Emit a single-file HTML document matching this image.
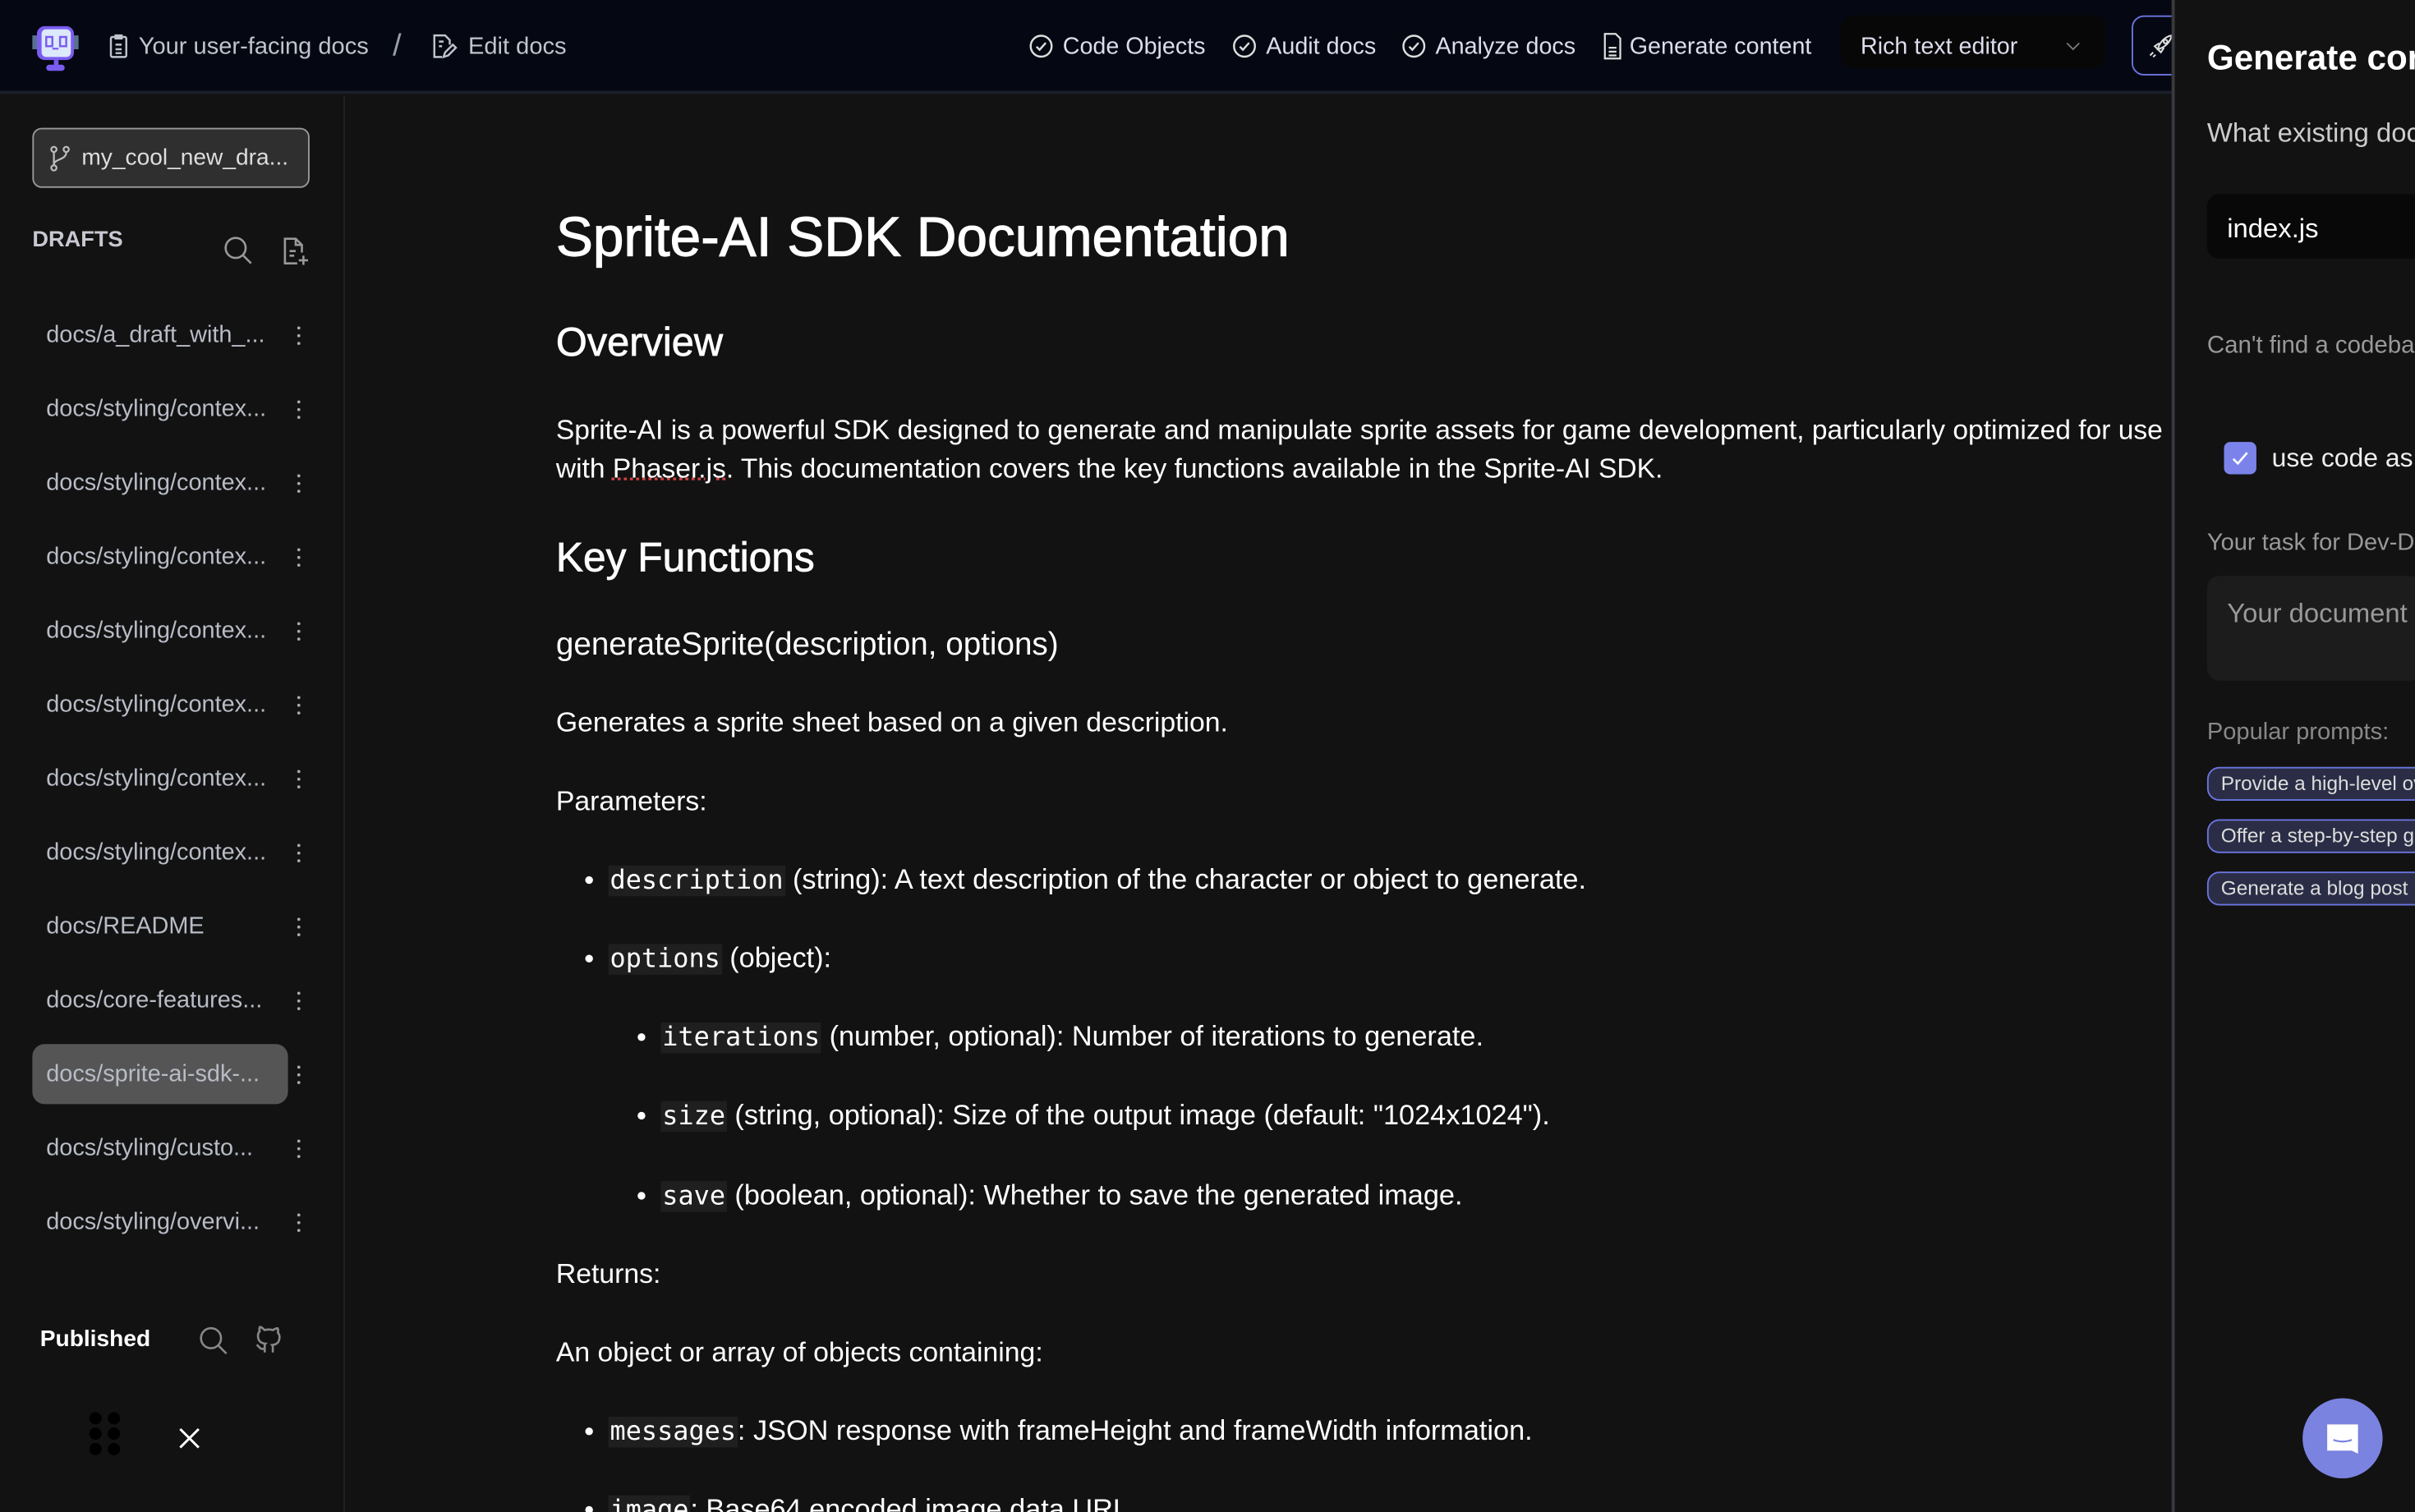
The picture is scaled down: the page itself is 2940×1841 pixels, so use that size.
<!DOCTYPE html>
<html><head><meta charset="utf-8"><style>
*{margin:0;padding:0;box-sizing:border-box}
html,body{width:2940px;height:1840px;overflow:hidden;background:#121212}
#s{position:absolute;left:0;top:0;width:1568px;height:982px;transform:scale(1.875);transform-origin:0 0;font-family:"Liberation Sans",sans-serif;color:#fff;background:#121212;overflow:hidden}
.a{position:absolute;white-space:nowrap}
.t{position:absolute;white-space:nowrap;line-height:24px;height:24px}
code{font-family:"DejaVu Sans Mono","Liberation Mono",monospace;background:#1f1f1f;font-size:17px;padding:0 1px}
.dot{position:absolute;width:5px;height:5px;border-radius:50%;background:#fff}
.si{position:absolute;left:30px;font-size:15.4px;color:#b8bcc6;line-height:20px}
.kb{position:absolute;left:193px;width:2px;height:12px}
.kb i{display:block;width:2px;height:2px;background:#aaa;margin-bottom:3px;border-radius:1px}
.chip{position:absolute;left:1433px;height:22px;border:1px solid #6b74e0;border-radius:8px;background:#2a2d45;font-size:13px;color:#ddd;line-height:20px;padding-left:8px;width:200px}
</style></head><body><div id="s">
<!-- topbar -->
<div class="a" style="left:0;top:0;width:1568px;height:61px;background:#050812;border-bottom:2px solid #1a1f2a"></div>
<svg class="a" style="left:20px;top:15px" width="32" height="32" viewBox="0 0 32 32"><rect x="1" y="8" width="4" height="9" fill="#5a7090"/><rect x="27" y="8" width="4" height="9" fill="#5a7090"/><rect x="4" y="2" width="24" height="22" rx="5" fill="#7b5cf0"/><rect x="7" y="4" width="19" height="18" rx="3" fill="#dce8fb"/><rect x="10" y="9" width="4" height="6" fill="none" stroke="#7b5cf0" stroke-width="1.3"/><rect x="19" y="9" width="4" height="6" fill="none" stroke="#7b5cf0" stroke-width="1.3"/><rect x="14" y="16" width="4" height="1.2" fill="#7b5cf0"/><rect x="15" y="24" width="3" height="4" fill="#7b5cf0"/><rect x="10" y="27" width="12" height="4" rx="2" fill="#7b5cf0"/></svg>
<svg class="a" style="left:70px;top:22px" width="14" height="16" viewBox="0 0 14 16" fill="none" stroke="#c0c4cc" stroke-width="1.3"><rect x="2" y="2" width="10" height="13" rx="1"/><rect x="5" y="1" width="4" height="2"/><path d="M5 7h4M5 10h4M5 12.5h4"/></svg>
<div class="t" style="left:90px;top:19px;font-size:15.5px;color:#c0c4cc">Your user-facing docs</div>
<div class="t" style="left:255px;top:18px;font-size:20px;color:#9aa0aa">/</div>
<svg class="a" style="left:279px;top:21px" width="18" height="18" viewBox="0 0 18 18" fill="none" stroke="#c0c4cc" stroke-width="1.3"><path d="M8 16H3V2h7l3 3v3"/><path d="M6 6h3M6 9h2"/><path d="M9 16l1-3 5-5 2 2-5 5z"/></svg>
<div class="t" style="left:304px;top:19px;font-size:15.5px;color:#c0c4cc">Edit docs</div>
<svg class="a" style="left:668px;top:22px" width="16" height="16" viewBox="0 0 16 16" fill="none" stroke="#ddd" stroke-width="1.3"><circle cx="8" cy="8" r="6.8"/><path d="M5 8.3l2 2 4-4.5"/></svg>
<div class="t" style="left:690px;top:19px;font-size:15.3px;color:#dde">Code Objects</div>
<svg class="a" style="left:800px;top:22px" width="16" height="16" viewBox="0 0 16 16" fill="none" stroke="#ddd" stroke-width="1.3"><circle cx="8" cy="8" r="6.8"/><path d="M5 8.3l2 2 4-4.5"/></svg>
<div class="t" style="left:822px;top:19px;font-size:15.3px;color:#dde">Audit docs</div>
<svg class="a" style="left:910px;top:22px" width="16" height="16" viewBox="0 0 16 16" fill="none" stroke="#ddd" stroke-width="1.3"><circle cx="8" cy="8" r="6.8"/><path d="M5 8.3l2 2 4-4.5"/></svg>
<div class="t" style="left:932px;top:19px;font-size:15.3px;color:#dde">Analyze docs</div>
<svg class="a" style="left:1040px;top:21px" width="14" height="18" viewBox="0 0 14 18" fill="none" stroke="#ddd" stroke-width="1.2"><path d="M2 1h7l3 3v13H2z"/><path d="M4.5 10h5M4.5 12.5h5M4.5 15h5"/></svg>
<div class="t" style="left:1058px;top:19px;font-size:15.3px;color:#dde">Generate content</div>
<div class="a" style="left:1195px;top:10px;width:172px;height:34px;background:#070707;border-radius:8px"></div>
<div class="t" style="left:1208px;top:19px;font-size:15.3px;color:#dde">Rich text editor</div>
<svg class="a" style="left:1341px;top:27px" width="10" height="6" viewBox="0 0 10 6" fill="none" stroke="#777" stroke-width="1"><path d="M1 1l4 4 4-4"/></svg>
<div class="a" style="left:1384px;top:10px;width:40px;height:39px;border:1.5px solid #6b74e0;border-radius:8px"></div>
<svg class="a" style="left:1395px;top:22px" width="16" height="16" viewBox="0 0 16 16" fill="none" stroke="#ddd" stroke-width="1.1"><path d="M6 10c1-4 4-8 9-9-1 5-5 8-9 9z"/><circle cx="11" cy="5" r="1.2"/><path d="M6 10l-2-2 3-2M6 10l2 2 2-3M3 12l-2 2M4.5 13.5l-1.5 1.5"/></svg>
<!-- sidebar -->
<div class="a" style="left:223px;top:62px;width:1px;height:920px;background:#222"></div>
<div class="a" style="left:21px;top:83px;width:180px;height:39px;border:1px solid #999;border-radius:6px;background:#2f2f2f"></div>
<svg class="a" style="left:32px;top:94px" width="14" height="18" viewBox="0 0 14 18" fill="none" stroke="#bbb" stroke-width="1.2"><circle cx="3" cy="3" r="1.7"/><circle cx="3" cy="15" r="1.7"/><circle cx="11" cy="3" r="1.7"/><path d="M3 5v8M11 5c0 5-8 4-8 8"/></svg>
<div class="t" style="left:53px;top:91px;font-size:15px;color:#ddd">my_cool_new_dra...</div>
<div class="t" style="left:21px;top:144px;font-size:14.5px;font-weight:bold;color:#c8c8d2">DRAFTS</div>
<svg class="a" style="left:145px;top:153px" width="19" height="19" viewBox="0 0 19 19" fill="none" stroke="#999" stroke-width="1.4"><circle cx="8" cy="8" r="6.5"/><path d="M13 13l5 5"/></svg>
<svg class="a" style="left:183px;top:153px" width="19" height="20" viewBox="0 0 19 20" fill="none" stroke="#999" stroke-width="1.4"><path d="M10 18H2V2h7l4 4v5"/><path d="M9 2v4h4M5 10h4M5 13h3M14 13v6M11 16h6"/></svg>
<div class="a" style="left:21px;top:678px;width:166px;height:39px;background:#555;border-radius:8px"></div>
<div class="si" style="top:208px">docs/a_draft_with_...</div>
<div class="si" style="top:256px">docs/styling/contex...</div>
<div class="si" style="top:304px">docs/styling/contex...</div>
<div class="si" style="top:352px">docs/styling/contex...</div>
<div class="si" style="top:400px">docs/styling/contex...</div>
<div class="si" style="top:448px">docs/styling/contex...</div>
<div class="si" style="top:496px">docs/styling/contex...</div>
<div class="si" style="top:544px">docs/styling/contex...</div>
<div class="si" style="top:592px">docs/README</div>
<div class="si" style="top:640px">docs/core-features...</div>
<div class="si" style="top:688px">docs/sprite-ai-sdk-...</div>
<div class="si" style="top:736px">docs/styling/custo...</div>
<div class="si" style="top:784px">docs/styling/overvi...</div>
<div class="kb" style="top:212px"><i></i><i></i><i></i></div>
<div class="kb" style="top:260px"><i></i><i></i><i></i></div>
<div class="kb" style="top:308px"><i></i><i></i><i></i></div>
<div class="kb" style="top:356px"><i></i><i></i><i></i></div>
<div class="kb" style="top:404px"><i></i><i></i><i></i></div>
<div class="kb" style="top:452px"><i></i><i></i><i></i></div>
<div class="kb" style="top:500px"><i></i><i></i><i></i></div>
<div class="kb" style="top:548px"><i></i><i></i><i></i></div>
<div class="kb" style="top:596px"><i></i><i></i><i></i></div>
<div class="kb" style="top:644px"><i></i><i></i><i></i></div>
<div class="kb" style="top:692px"><i></i><i></i><i></i></div>
<div class="kb" style="top:740px"><i></i><i></i><i></i></div>
<div class="kb" style="top:788px"><i></i><i></i><i></i></div>
<div class="t" style="left:26px;top:858px;font-size:15px;font-weight:bold;color:#fff">Published</div>
<svg class="a" style="left:129px;top:861px" width="19" height="19" viewBox="0 0 19 19" fill="none" stroke="#888" stroke-width="1.4"><circle cx="8" cy="8" r="6.5"/><path d="M13 13l5 5"/></svg>
<svg class="a" style="left:164px;top:859px" width="21" height="21" viewBox="0 0 24 24" fill="none" stroke="#888" stroke-width="1.6"><path d="M9 19c-4 1.5-4-2-6-2.5M15 22v-3.5c0-1 .1-1.4-.5-2 2.8-.3 5.5-1.4 5.5-6a4.6 4.6 0 0 0-1.3-3.2 4.2 4.2 0 0 0-.1-3.2s-1.1-.3-3.5 1.3a12 12 0 0 0-6.2 0C6.5 2.8 5.4 3.1 5.4 3.1a4.2 4.2 0 0 0-.1 3.2A4.6 4.6 0 0 0 4 9.5c0 4.6 2.7 5.7 5.5 6-.6.6-.6 1.2-.5 2V22"/></svg>
<div class="a" style="left:58px;top:917px;width:22px;height:33px">
<div class="a" style="left:0;top:0;width:8px;height:8px;border-radius:50%;background:#000"></div><div class="a" style="left:12px;top:0;width:8px;height:8px;border-radius:50%;background:#000"></div>
<div class="a" style="left:0;top:10px;width:8px;height:8px;border-radius:50%;background:#000"></div><div class="a" style="left:12px;top:10px;width:8px;height:8px;border-radius:50%;background:#000"></div>
<div class="a" style="left:0;top:20px;width:8px;height:8px;border-radius:50%;background:#000"></div><div class="a" style="left:12px;top:20px;width:8px;height:8px;border-radius:50%;background:#000"></div></div>
<svg class="a" style="left:116px;top:927px" width="14" height="14" viewBox="0 0 14 14" stroke="#fff" stroke-width="1.6"><path d="M1 1l12 12M13 1L1 13"/></svg>
<!-- content -->
<div class="a" style="left:361px;top:132px;font-size:36px;line-height:44px;color:#fff;-webkit-text-stroke:0.6px #fff">Sprite-AI SDK Documentation</div>
<div class="a" style="left:361px;top:206px;font-size:26px;line-height:32px;color:#fff;-webkit-text-stroke:0.4px #fff">Overview</div>
<div class="t" style="left:361px;top:267px;font-size:17.9px">Sprite-AI is a powerful SDK designed to generate and manipulate sprite assets for game development, particularly optimized for use</div>
<div class="t" style="left:361px;top:292px;font-size:17.9px">with <span style="text-decoration:underline dotted #d04040">Phaser.js</span>. This documentation covers the key functions available in the Sprite-AI SDK.</div>
<div class="a" style="left:361px;top:346px;font-size:26.5px;line-height:32px;color:#fff;-webkit-text-stroke:0.4px #fff">Key Functions</div>
<div class="a" style="left:361px;top:406px;font-size:20.6px;line-height:26px">generateSprite(description, options)</div>
<div class="t" style="left:361px;top:457px;font-size:18px">Generates a sprite sheet based on a given description.</div>
<div class="t" style="left:361px;top:508px;font-size:18px">Parameters:</div>
<div class="dot" style="left:380px;top:569px"></div>
<div class="t" style="left:395px;top:559px;font-size:18.3px"><code>description</code> (string): A text description of the character or object to generate.</div>
<div class="dot" style="left:380px;top:620px"></div>
<div class="t" style="left:395px;top:610px;font-size:18.3px"><code>options</code> (object):</div>
<div class="dot" style="left:414px;top:671px"></div>
<div class="t" style="left:429px;top:661px;font-size:18.3px"><code>iterations</code> (number, optional): Number of iterations to generate.</div>
<div class="dot" style="left:414px;top:722px"></div>
<div class="t" style="left:429px;top:712px;font-size:18.3px"><code>size</code> (string, optional): Size of the output image (default: "1024x1024").</div>
<div class="dot" style="left:414px;top:774px"></div>
<div class="t" style="left:429px;top:764px;font-size:18.3px"><code>save</code> (boolean, optional): Whether to save the generated image.</div>
<div class="t" style="left:361px;top:815px;font-size:18px">Returns:</div>
<div class="t" style="left:361px;top:866px;font-size:18px">An object or array of objects containing:</div>
<div class="dot" style="left:380px;top:927px"></div>
<div class="t" style="left:395px;top:917px;font-size:18.3px"><code>messages</code>: JSON response with frameHeight and frameWidth information.</div>
<div class="dot" style="left:380px;top:978px"></div>
<div class="t" style="left:395px;top:968px;font-size:18.3px"><code>image</code>: Base64 encoded image data URL.</div>
<!-- right panel -->
<div class="a" style="left:1410px;top:0;width:158px;height:982px;background:#121212;border-left:2px solid #3a3a3e"></div>
<div class="t" style="left:1433px;top:24px;font-size:22.5px;line-height:28px;height:28px;font-weight:bold">Generate content</div>
<div class="t" style="left:1433px;top:74px;font-size:17.5px;color:#ccc">What existing docs</div>
<div class="a" style="left:1433px;top:126px;width:140px;height:42px;background:#080808;border-radius:8px"></div>
<div class="t" style="left:1446px;top:136px;font-size:17.5px">index.js</div>
<div class="t" style="left:1433px;top:213px;font-size:15.7px;color:#999">Can't find a codebase</div>
<div class="a" style="left:1444px;top:287px;width:21px;height:21px;background:#7b83eb;border-radius:4px"></div>
<svg class="a" style="left:1448px;top:291px" width="13" height="13" viewBox="0 0 13 13" fill="none" stroke="#fff" stroke-width="1.4"><path d="M2 7l3 3 6-7"/></svg>
<div class="t" style="left:1475px;top:286px;font-size:17px;color:#eee">use code as</div>
<div class="t" style="left:1433px;top:341px;font-size:15.5px;color:#999">Your task for Dev-Docs</div>
<div class="a" style="left:1433px;top:374px;width:140px;height:68px;background:#1c1c1c;border-radius:8px"></div>
<div class="t" style="left:1446px;top:386px;font-size:17.5px;color:#999">Your document</div>
<div class="t" style="left:1433px;top:464px;font-size:15.5px;color:#888">Popular prompts:</div>
<div class="chip" style="top:498px">Provide a high-level overview</div>
<div class="chip" style="top:532px">Offer a step-by-step guide</div>
<div class="chip" style="top:566px">Generate a blog post</div>
<div class="a" style="left:1495px;top:908px;width:52px;height:52px;border-radius:50%;background:#7b83e0"></div>
<svg class="a" style="left:1509px;top:922px" width="24" height="24" viewBox="0 0 24 24"><path d="M2 3h20v19l-4-2H2z" fill="#fff"/><path d="M6 13c4 1.5 8 1.5 12 0" fill="none" stroke="#7b83e0" stroke-width="1.2"/></svg>
</div></body></html>
